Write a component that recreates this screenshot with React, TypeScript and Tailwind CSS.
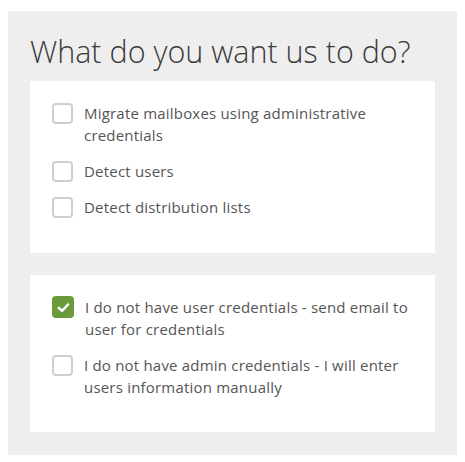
import React from "react";

function Box({ checked }: { checked?: boolean }) {
  if (checked) {
    return (
      <span className="flex h-[22px] w-[22px] shrink-0 items-center justify-center rounded-[4px] bg-[#6b9a3b]">
        <svg width="13" height="11" viewBox="0 0 13 11" fill="none">
          <path d="M1.8 5.8 L5 8.8 L11.2 2.4" stroke="#ffffff" strokeWidth="2.4" strokeLinecap="round" strokeLinejoin="round" />
        </svg>
      </span>
    );
  }
  return <span className="mt-[1px] block h-[21px] w-[21px] shrink-0 rounded-[4px] border-2 border-[#cfcfcf] bg-white" />;
}

function Item({ label, checked, last }: { label: string; checked?: boolean; last?: boolean }) {
  return (
    <div className={`flex items-start gap-[11px] ${last ? "" : "mb-[14px]"}`}>
      <Box checked={checked} />
      <span className="text-[15px] leading-[22px] tracking-[0.2px] text-[#555555]">{label}</span>
    </div>
  );
}

export default function App() {
  return (
    <div className="h-[462px] w-[465px] bg-white pt-[11px] pl-[8px]" style={{ fontFamily: '"Open Sans", "Noto Sans", sans-serif' }}>
      <div className="h-[444px] w-[449px] bg-[#eeeeee] px-[22px] pt-[22px]">
        <h1
          className="mb-[12px] text-[30.5px] font-light leading-[36px] text-[#3a3a3a]"
          style={{ fontFamily: '"Open Sans Light", "Open Sans", "Noto Sans", sans-serif' }}
        >
          What do you want us to do?
        </h1>
        <div className="mb-[22px] h-[172px] bg-white pl-[22px] pr-[22px] pt-[21px]">
          <Item label="Migrate mailboxes using administrative credentials" />
          <Item label="Detect users" />
          <Item label="Detect distribution lists" last />
        </div>
        <div className="h-[157px] bg-white pl-[22px] pr-[22px] pt-[21px]">
          <Item label="I do not have user credentials - send email to user for credentials" checked />
          <Item label="I do not have admin credentials - I will enter users information manually" last />
        </div>
      </div>
    </div>
  );
}
